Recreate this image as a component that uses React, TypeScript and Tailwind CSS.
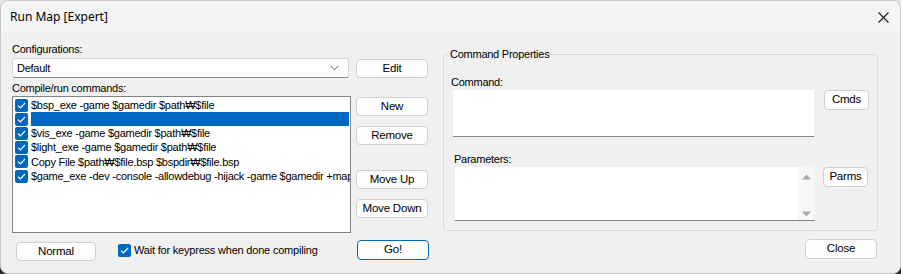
import React from "react";

const font = { fontFamily: '"Liberation Sans", Arial, "Noto Sans CJK KR", sans-serif' };

function Btn({ label, className = "", primary = false }: { label: string; className?: string; primary?: boolean }) {
  return (
    <div
      className={
        "flex items-center justify-center rounded-[4px] bg-[#fdfdfd] text-[11.5px] tracking-[-0.2px] text-black " +
        (primary ? "border border-[#0067c0] " : "border border-[#d0d0d0] ") +
        className
      }
    >
      {label}
    </div>
  );
}

function Check({ className = "" }: { className?: string }) {
  return (
    <div className={"flex h-[13px] w-[13px] shrink-0 items-center justify-center rounded-[2px] bg-[#0067c0] " + className}>
      <svg width="9" height="9" viewBox="0 0 9 9" fill="none">
        <path d="M1 4.6 L3.4 7 L8 2" stroke="white" strokeWidth="1.2" />
      </svg>
    </div>
  );
}

const items = [
  "$bsp_exe -game $gamedir $path₩$file",
  "",
  "$vis_exe -game $gamedir $path₩$file",
  "$light_exe -game $gamedir $path₩$file",
  "Copy File $path₩$file.bsp $bspdir₩$file.bsp",
  "$game_exe -dev -console -allowdebug -hijack -game $gamedir +map",
];

export default function App() {
  return (
    <div className="h-[274px] w-[901px] bg-[linear-gradient(#e6e6e6_50%,#2a2a2a_50%)]" style={font}>
      <div className="flex h-[274px] w-[901px] flex-col overflow-hidden rounded-[8px] border border-[#c8c8c8] bg-[#f0f0f0] text-[11px] tracking-[-0.25px] text-black">
        {/* Title bar */}
        <div className="flex h-[32px] items-center justify-between bg-[#f3f4f6] pl-[9px] pr-[10px]">
          <span className="text-[12px] tracking-normal" style={{ fontFamily: '"Noto Sans", "Open Sans", sans-serif' }}>
            Run Map [Expert]
          </span>
          <svg width="11" height="11" viewBox="0 0 11 11" className="mr-[1px]">
            <path d="M0.5 0.5 L10.5 10.5 M10.5 0.5 L0.5 10.5" stroke="#1a1a1a" strokeWidth="1.1" />
          </svg>
        </div>

        {/* Body */}
        <div className="flex flex-1 pl-[11px]">
          {/* Left part */}
          <div className="flex w-[417px] flex-col">
            <div className="mt-[9px] h-[14px] leading-[14px]">Configurations:</div>
            <div className="mt-[2px] flex items-start">
              <div className="flex h-[20px] w-[337px] items-center justify-between rounded-[3px] border border-[#d6d6d6] border-b-[#8a8a8a] bg-white pl-[4px] pr-[9px]">
                <span>Default</span>
                <svg width="9" height="6" viewBox="0 0 9 6">
                  <path d="M0.5 0.8 L4.5 4.8 L8.5 0.8" stroke="#555" strokeWidth="0.9" fill="none" />
                </svg>
              </div>
              <Btn label="Edit" className="ml-[7px] mt-[1px] h-[19px] w-[72px]" />
            </div>
            <div className="mt-[3px] h-[14px] leading-[14px]">Compile/run commands:</div>
            <div className="mt-[1px] flex items-start">
              <div className="h-[137px] w-[339px] overflow-hidden border border-[#838383] bg-white pl-[1px] pt-[1px]">
                {items.map((t, i) => (
                  <div key={i} className="flex h-[14.2px] items-center">
                    <Check className="ml-[1px]" />
                    <div
                      className={
                        "ml-[3px] flex h-[14px] flex-1 items-center whitespace-nowrap " +
                        (i === 1 ? "mr-[1px] bg-[#0067c0]" : "")
                      }
                    >
                      {t}
                    </div>
                  </div>
                ))}
              </div>
              <div className="ml-[5px] flex w-[72px] flex-col">
                <Btn label="New" className="mt-[1px] h-[19px]" />
                <Btn label="Remove" className="mt-[10px] h-[19px]" />
                <Btn label="Move Up" className="mt-[25px] h-[19px]" />
                <Btn label="Move Down" className="mt-[10px] h-[19px]" />
              </div>
            </div>
            <div className="mt-[7px] flex items-start">
              <Btn label="Normal" className="ml-[4px] mt-[2px] h-[19px] w-[80px]" />
              <div className="ml-[22px] mt-[2px] flex items-center">
                <Check />
                <span className="ml-[3px] text-[11px] tracking-[-0.2px]">Wait for keypress when done compiling</span>
              </div>
              <div className="flex-1" />
              <Btn label="Go!" primary className="h-[20px] w-[72px]" />
            </div>
          </div>

          {/* Right part */}
          <div className="ml-[14px] flex w-[435px] flex-col">
            <div className="relative mt-[21px] h-[177px] rounded-[3px] border border-[#dadada]">
              <span className="absolute left-[5px] top-[-8px] bg-[#f0f0f0] px-[1px] leading-[14px]">Command Properties</span>
              <div className="ml-[7px] mt-[20px] h-[14px] leading-[14px]">Command:</div>
              <div className="mt-[1px] flex items-start">
                <div className="ml-[9px] h-[47px] w-[361px] border-b border-[#868686] bg-white" />
                <Btn label="Cmds" className="ml-[10px] h-[20px] w-[45px]" />
              </div>
              <div className="ml-[10px] mt-[15px] h-[14px] leading-[14px]">Parameters:</div>
              <div className="mt-[1px] flex items-start">
                <div className="ml-[11px] flex h-[54px] w-[360px] justify-end border-b border-[#868686] bg-white">
                  <div className="flex w-[17px] flex-col items-center justify-between bg-[#f7f7f7] pb-[3px] pt-[7px]">
                    <svg width="9" height="6" viewBox="0 0 9 6">
                      <path d="M0 5.5 L4.5 0.5 L9 5.5 Z" fill="#a8a8a8" />
                    </svg>
                    <svg width="9" height="6" viewBox="0 0 9 6">
                      <path d="M0 0.5 L4.5 5.5 L9 0.5 Z" fill="#a8a8a8" />
                    </svg>
                  </div>
                </div>
                <Btn label="Parms" className="ml-[8px] h-[20px] w-[45px]" />
              </div>
            </div>
            <div className="mt-[8px] flex justify-end pr-[1px]">
              <Btn label="Close" className="h-[20px] w-[72px]" />
            </div>
          </div>
        </div>
      </div>
    </div>
  );
}
